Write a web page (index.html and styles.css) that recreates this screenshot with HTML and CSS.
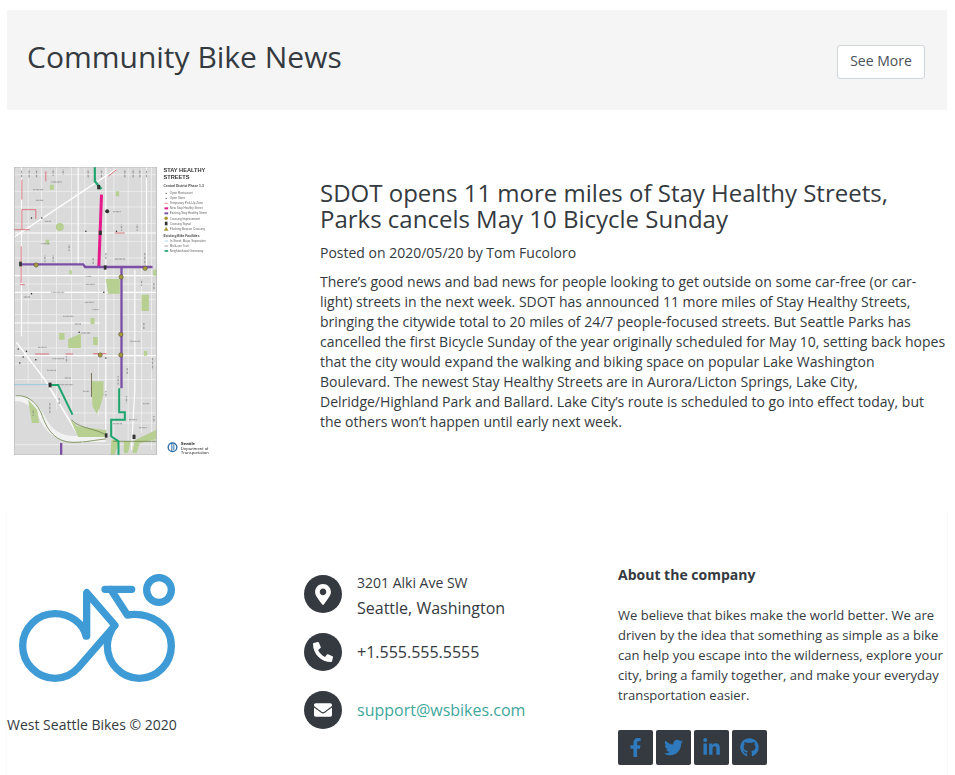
FILE: index.html
```html
<!DOCTYPE html>
<html lang="en">
<head>
<meta charset="utf-8">
<title>Community Bike News</title>
<link rel="stylesheet" href="styles.css">
</head>
<body>
<section class="banner">
  <h1 class="banner-title">Community Bike News</h1>
  <a class="btn" href="#">See More</a>
</section>
<article class="post">
  <div class="post-thumb">
    <svg class="map" viewBox="43 52 590 864" aria-hidden="true">
      <rect x="43" y="52" width="427" height="864" fill="#dadada"/>
      <g stroke="#f4f4f4" stroke-width="2" fill="none">
        <path d="M43 75H470M43 125H470M43 172H470M43 222H470M43 275H470M43 325H470M43 403H470M43 450H470M43 495H470M43 545H470M43 595H470M43 642H470M43 690H470M43 745H470M210 790H470M240 820H470M43 885H470"/>
        <path d="M85 52V700M125 52V700M170 52V780M215 52V780M255 52V840M296 350V800M342 52V900M385 52V900M425 52V850M455 52V900"/>
      </g>
      <g stroke="#fff" stroke-width="3.5" fill="none">
        <path d="M43 250H470M43 378H470M43 428H470M43 520H300M43 618H470"/>
        <path d="M65 52V560M235 52V345M318 52V840M405 360V720L395 900M440 52V350"/>
        <path d="M43 262L350 58" stroke-width="4.5"/>
        <path d="M50 578L135 690L250 880" stroke-width="4.5"/>
      </g>
      <path d="M45 745C80 745 110 770 130 810C150 850 180 868 230 868H318" stroke="#f2f2f2" stroke-width="18" fill="none"/>
      <g fill="#b7cf90">
        <path d="M318 388H360V432H325ZM425 435H447V484H425ZM205 568L243 552V595H205ZM275 695H311V735L300 775L290 792L278 770Z"/>
        <circle cx="180" cy="232" r="12"/>
        <path d="M178 550H194V570H178ZM280 562H294V586H280ZM348 125H358V140H348ZM272 505H284V523H272ZM432 604H442V618H432ZM150 105H162V120H150ZM208 362H216V374H208ZM460 360H470V378H460ZM137 270H148V284H137Z"/>
        <path d="M85 750L112 780L118 820H96ZM212 810L232 830L318 842V862H235ZM335 870H356V880L345 916H332ZM372 875H392L385 910H372ZM405 872L470 840V868L420 880L410 910H398Z"/>
      </g>
      <g fill="none" stroke="#75884f" stroke-width="2.5">
        <path d="M47 738C90 735 115 765 128 800C145 850 175 878 220 878C260 878 290 870 318 868"/>
        <path d="M215 810C235 835 280 835 318 855M340 875H470"/>
      </g>
      <g class="map-labels" stroke="#8a8a8a" stroke-width="4" stroke-dasharray="2 2" fill="none">
        <path d="M65 60V85M88 60V85M110 60V85M160 60V80M190 60V75M265 60V85M305 60V85M375 60V85M400 60V85M420 60V85M440 60V85"/>
        <path d="M155 97H185M100 120H132M108 152H132M135 215H155M340 186H364M125 282H150M345 328H375M260 380H275M258 404H285M255 458H282M278 480H298M190 500H220M225 523H245M245 550H272M390 575H420M115 593H140M158 627H192M142 662H170M195 685H215M175 705H220M250 725H268M388 810H412M340 822H368M418 834H442M430 762H448M155 428H195M72 442H90"/>
        <path d="M365 225V245M412 225V245M208 285V305M160 318V338M135 318V338M280 325V345M318 310V330M435 310V345M462 400V420M425 390V410M382 655V675M355 680V705M200 620V640M458 625V660M318 725V745M380 740V760M432 520V540M100 780V800M150 760V790M178 745V765M462 800V820"/>
      </g>
      <g fill="#222">
        <circle cx="126" cy="205" r="2.2"/><circle cx="95" cy="205" r="2.2"/><circle cx="258" cy="245" r="2.2"/><circle cx="350" cy="245" r="2.2"/><circle cx="312" cy="428" r="2.2"/><circle cx="238" cy="548" r="2.2"/><circle cx="60" cy="640" r="2.2"/><circle cx="80" cy="605" r="2.2"/><circle cx="108" cy="630" r="2.2"/><circle cx="318" cy="625" r="2.2"/><circle cx="95" cy="432" r="2.2"/><circle cx="55" cy="598" r="2.2"/><circle cx="70" cy="622" r="2.2"/>
      </g>
      <path d="M66 90V150M66 180H108V208M66 180V240M43 240H90M64 290V400M106 613H148M197 613H220M280 612H320M138 65V95M350 60L325 80M345 250H375M60 405H75" stroke="#d8606a" stroke-width="2.5" fill="none"/>
      <path d="M43 705H150" stroke="#8cc4dc" stroke-width="2.5" fill="none"/>
      <path d="M275 670V742" stroke="#6b6040" stroke-width="2.5" fill="none"/>
      <path d="M285 52V95L305 118" stroke="#1fa56f" stroke-width="6.5" fill="none"/>
      <path d="M305 135L297 352" stroke="#e5198c" stroke-width="9" fill="none"/>
      <path d="M60 344H250L256 352H458M365 352V716M184 880V916" stroke="#7b4fa5" stroke-width="7" fill="none"/>
      <path d="M150 706H175L218 795M358 716V788H375V810H334V860L356 875V916" stroke="#1fa56f" stroke-width="6" fill="none"/>
      <g fill="#a99b3c" stroke="#4a4a3a" stroke-width="1.5">
        <circle cx="109" cy="346" r="6.5"/><circle cx="436" cy="356" r="6.5"/><circle cx="364" cy="382" r="6.5"/>
        <circle cx="363" cy="554" r="6.5"/><circle cx="301" cy="616" r="6.5"/><circle cx="363" cy="616" r="6.5"/>
      </g>
      <g fill="#333">
        <rect x="58" y="336" width="8" height="14"/><rect x="312" y="347" width="8" height="13"/><rect x="292" y="106" width="9" height="13"/>
        <rect x="297" y="243" width="9" height="13"/><rect x="146" y="699" width="9" height="14"/><rect x="315" y="851" width="8" height="13"/><rect x="398" y="855" width="9" height="13"/>
        <circle cx="322" cy="185" r="6"/>
      </g>
      <rect x="43" y="52" width="427" height="864" fill="none" stroke="#aaa" stroke-width="2"/>
      <g class="map-legend">
        <text x="491" y="66" class="map-head">STAY HEALTHY</text>
        <text x="491" y="88" class="map-head">STREETS</text>
        <text x="491" y="112" class="map-sub">Central District Phase 1-3</text>
        <text x="510" y="134">Open Restaurant</text>
        <text x="510" y="149">Open Store</text>
        <text x="510" y="164">Temporary Pick-Up Zone</text>
        <text x="510" y="179">New Stay Healthy Street</text>
        <text x="510" y="194">Existing Stay Healthy Street</text>
        <text x="510" y="210">Crossing Improvement</text>
        <text x="510" y="225">Crossing Signal</text>
        <text x="510" y="241">Flashing Beacon Crossing</text>
        <text x="491" y="261" class="map-sub">Existing Bike Facilities</text>
        <text x="510" y="277">In Street, Major Separation</text>
        <text x="510" y="292">Multi-use Trail</text>
        <text x="510" y="308">Neighborhood Greenway</text>
      </g>
      <path d="M494 161H505" stroke="#d8505c" stroke-width="2"/>
      <path d="M494 176H505" stroke="#e5198c" stroke-width="6"/>
      <path d="M494 191H505" stroke="#7b4fa5" stroke-width="6"/>
      <path d="M494 274H505" stroke="#8cc4dc" stroke-width="2"/>
      <path d="M494 289H505" stroke="#777" stroke-width="2"/>
      <path d="M494 304H505" stroke="#1fa56f" stroke-width="5"/>
      <circle cx="499" cy="206" r="5.5" fill="#a99b3c"/><rect x="495" y="216" width="8" height="11" fill="#333"/><path d="M499 231L506 243H492Z" fill="#a99b3c"/>
      <circle cx="499" cy="131" r="2" fill="#333"/><circle cx="499" cy="146" r="2" fill="#336"/>
      <circle cx="518" cy="893" r="13" fill="none" stroke="#2d6da8" stroke-width="4"/>
      <path d="M516 880V906M522 884V902" stroke="#2d6da8" stroke-width="3"/>
      <text x="543" y="887" class="map-org">Seattle</text>
      <text x="543" y="900" class="map-org-light">Department of</text>
      <text x="543" y="913" class="map-org-light">Transportation</text>
    </svg>
  </div>
  <div class="post-body">
    <h2 class="post-title">SDOT opens 11 more miles of Stay Healthy Streets, Parks cancels May 10 Bicycle Sunday</h2>
    <p class="post-meta">Posted on 2020/05/20 by Tom Fucoloro</p>
    <p class="post-text">There’s good news and bad news for people looking to get outside on some car-free (or car-light) streets in the next week. SDOT has announced 11 more miles of Stay Healthy Streets, bringing the citywide total to 20 miles of 24/7 people-focused streets. But Seattle Parks has cancelled the first Bicycle Sunday of the year originally scheduled for May 10, setting back hopes that the city would expand the walking and biking space on popular Lake Washington Boulevard. The newest Stay Healthy Streets are in Aurora/Licton Springs, Lake City, Delridge/Highland Park and Ballard. Lake City’s route is scheduled to go into effect today, but the others won’t happen until early next week.</p>
  </div>
</article>
<footer class="footer">
  <div class="foot-brand">
    <svg class="logo" viewBox="57 222 468 324" aria-hidden="true">
      <g fill="none" stroke="#3f9bd5" stroke-width="22" stroke-linecap="round" stroke-linejoin="round">
        <path d="M258 408C250 370 210 341 165 341C112 341 68 384 68 437C68 490 112 535 165 535C195 535 218 522 235 503L345 376L260 278V408"/>
        <path d="M315 268H395M332 268L382 345C450 335 514 375 514 437C514 490 471 535 418 535C365 535 322 490 322 437C322 420 326 408 334 392"/>
        <circle cx="477" cy="270" r="37"/>
      </g>
    </svg>
    <p class="copyright">West Seattle Bikes © 2020</p>
  </div>
  <div class="foot-contact">
    <div class="contact-row">
      <span class="contact-icon"><svg class="icon-pin" viewBox="0 0 384 512"><path d="M172.268 501.67C26.97 291.031 0 262.528 0 192 0 85.961 85.961 0 192 0s192 85.961 192 192c0 70.528-26.97 99.031-172.268 309.67-9.535 13.774-29.93 13.773-39.464 0zM192 272c44.183 0 80-35.817 80-80s-35.817-80-80-80-80 35.817-80 80 35.817 80 80 80z"/></svg></span>
      <div class="contact-text contact-stack"><div class="contact-small">3201 Alki Ave SW</div><div class="contact-line">Seattle, Washington</div></div>
    </div>
    <div class="contact-row">
      <span class="contact-icon"><svg class="icon-phone" viewBox="0 0 512 512"><path d="M493.4 24.6l-104-24c-11.3-2.6-22.9 3.3-27.5 13.9l-48 112c-4.2 9.8-1.4 21.3 6.9 28l60.6 49.6c-36 76.7-98.9 140.5-177.2 177.2l-49.6-60.6c-6.8-8.3-18.2-11.1-28-6.9l-112 48C3.9 366.5-2 378.1.6 389.4l24 104C27.1 504.2 36.7 512 48 512c256.1 0 464-207.5 464-464 0-11.2-7.7-20.9-18.6-23.4z"/></svg></span>
      <div class="contact-text contact-line">+1.555.555.5555</div>
    </div>
    <div class="contact-row">
      <span class="contact-icon"><svg viewBox="0 0 512 512"><path d="M502.3 190.8c3.9-3.1 9.7-.2 9.7 4.7V400c0 26.5-21.5 48-48 48H48c-26.5 0-48-21.5-48-48V195.6c0-5 5.7-7.8 9.7-4.7 22.4 17.4 52.1 39.5 154.1 113.6 21.1 15.4 56.7 47.8 92.2 47.6 35.7.3 72-32.8 92.3-47.6 102-74.1 131.6-96.3 154-113.7zM256 320c23.2.4 56.6-29.2 73.4-41.4 132.7-96.3 142.8-104.7 173.4-128.7 5.8-4.5 9.2-11.5 9.2-18.9v-19c0-26.5-21.5-48-48-48H48C21.5 64 0 85.5 0 112v19c0 7.4 3.4 14.3 9.2 18.9 30.6 23.9 40.7 32.4 173.4 128.7 16.8 12.2 50.2 41.8 73.4 41.4z"/></svg></span>
      <a class="contact-text contact-line contact-link" href="#">support@wsbikes.com</a>
    </div>
  </div>
  <div class="foot-about">
    <h3 class="about-title">About the company</h3>
    <p class="about-text">We believe that bikes make the world better. We are driven by the idea that something as simple as a bike can help you escape into the wilderness, explore your city, bring a family together, and make your everyday transportation easier.</p>
    <div class="socials">
      <a class="social" href="#"><svg viewBox="0 0 320 512"><path d="M279.14 288l14.22-92.66h-88.91v-60.13c0-25.35 12.42-50.06 52.24-50.06h40.42V6.26S260.43 0 225.36 0c-73.22 0-121.08 44.38-121.08 124.72v70.62H22.89V288h81.39v224h100.17V288z"/></svg></a>
      <a class="social" href="#"><svg viewBox="0 0 512 512"><path d="M459.37 151.716c.325 4.548.325 9.097.325 13.645 0 138.72-105.583 298.558-298.558 298.558-59.452 0-114.68-17.219-161.137-47.106 8.447.974 16.568 1.299 25.34 1.299 49.055 0 94.213-16.568 130.274-44.832-46.132-.975-84.792-31.188-98.112-72.772 6.498.974 12.995 1.624 19.818 1.624 9.421 0 18.843-1.3 27.614-3.573-48.081-9.747-84.143-51.98-84.143-102.985v-1.299c13.969 7.797 30.214 12.67 47.431 13.319-28.264-18.843-46.781-51.005-46.781-87.391 0-19.492 5.197-37.36 14.294-52.954 51.655 63.675 129.3 105.258 216.365 109.807-1.624-7.797-2.599-15.918-2.599-24.04 0-57.828 46.782-104.934 104.934-104.934 30.213 0 57.502 12.67 76.67 33.137 23.715-4.548 46.456-13.32 66.599-25.34-7.798 24.366-24.366 44.833-46.132 57.827 21.117-2.273 41.584-8.122 60.426-16.243-14.292 20.791-32.161 39.308-52.628 54.253z"/></svg></a>
      <a class="social" href="#"><svg viewBox="0 0 448 512"><path d="M100.28 448H7.4V148.9h92.88zM53.79 108.1C24.09 108.1 0 83.5 0 53.8a53.79 53.79 0 0 1 107.58 0c0 29.7-24.1 54.3-53.79 54.3zM447.9 448h-92.68V302.4c0-34.7-.7-79.2-48.29-79.2-48.29 0-55.69 37.7-55.69 76.7V448h-92.78V148.9h89.08v40.8h1.3c12.4-23.5 42.69-48.3 87.88-48.3 94 0 111.28 61.9 111.28 142.3V448z"/></svg></a>
      <a class="social" href="#"><svg viewBox="0 0 496 512"><path d="M244.8 8C106.1 8 0 113.3 0 252c0 110.9 69.8 205.8 169.5 239.2 12.8 2.3 17.3-5.6 17.3-12.1 0-6.2-.3-40.4-.3-61.4 0 0-70 15-84.7-29.8 0 0-11.4-29.1-27.8-36.6 0 0-22.9-15.7 1.6-16 0 0 24.9 2 38.6 25.8 21.9 38.6 58.6 27.5 72.9 20.9 2.3-16 8.8-27.1 16-33.7-55.9-6.2-112.3-14.3-112.3-110.5 0-27.5 7.6-41.3 23.6-58.9-2.6-6.5-11.1-33.3 2.6-67.9 20.9-6.5 69 27 69 27 20-5.6 41.5-8.5 62.8-8.5s42.8 2.9 62.8 8.5c0 0 48.1-33.6 69-27 13.7 34.7 5.2 61.4 2.6 67.9 16 17.7 25.8 31.5 25.8 58.9 0 96.5-58.9 104.2-114.8 110.5 9.2 7.9 17 22.9 17 46.4 0 33.7-.3 75.4-.3 83.6 0 6.5 4.6 14.4 17.3 12.1C428.2 457.8 496 362.9 496 252 496 113.3 383.5 8 244.8 8z"/></svg></a>
    </div>
  </div>
</footer>
</body>
</html>
```
FILE: styles.css
```css
* { box-sizing: border-box; }
html, body { height: 775px; overflow: hidden; }
body {
  margin: 0;
  padding: 10px 8px 0 7px;
  font-family: "Open Sans", sans-serif;
  font-size: 14px;
  line-height: 20px;
  color: #343a40;
  background: #fff;
}
.banner {
  height: 100px;
  background: #f5f5f5;
  display: flex;
  align-items: center;
  justify-content: space-between;
  padding: 0 22px 0 20px;
}
.banner-title { margin: 0 0 7px; font-size: 30px; line-height: 36px; font-weight: 400; }
.btn {
  display: block;
  width: 88px;
  height: 34px;
  margin-top: 3px;
  text-align: center;
  line-height: 30px;
  font-size: 14px;
  color: #495057;
  text-decoration: none;
  background: #fff;
  border: 1px solid #ced4da;
  border-radius: 3px;
}
.post {
  display: flex;
  margin-top: 57px;
  height: 344px;
}
.post-thumb { width: 313px; padding-left: 7px; flex: none; }
.map { display: block; width: 197px; height: 288px; filter: blur(0.35px); }
.map-legend text { font-family: "Liberation Sans", sans-serif; font-size: 9px; fill: #666; }
.map-legend .map-head { font-size: 17px; font-weight: 700; fill: #333; }
.map-legend .map-sub { font-size: 10px; font-weight: 700; fill: #444; }
.map-org { font-family: "Liberation Sans", sans-serif; font-size: 13px; font-weight: 700; fill: #222; }
.map-org-light { font-family: "Liberation Sans", sans-serif; font-size: 13px; fill: #333; }
.post-body { flex: 1; padding-top: 13px; min-width: 0; }
.post-title { margin: 0 0 11px; font-size: 24px; line-height: 26px; font-weight: 400; }
.post-meta { margin: 0 0 9px; }
.post-text { margin: 0; }
.footer {
  display: flex;
  height: 264px;
  box-shadow: -1px 0 #f9f9f9, 1px 0 #f9f9f9;
}
.foot-brand { width: 297px; flex: none; padding-top: 63px; }
.logo { display: block; width: 156px; height: 108px; margin-left: 12px; }
.copyright { margin: 33px 0 0; }
.foot-contact { width: 314px; flex: none; padding-top: 64px; display: flex; flex-direction: column; gap: 20px; }
.contact-row { display: flex; align-items: center; gap: 15px; height: 38px; }
.contact-icon {
  width: 38px; height: 38px; flex: none;
  border-radius: 50%;
  background: #343a40;
  display: flex; align-items: center; justify-content: center;
}
.contact-icon svg { width: 18px; height: 18px; fill: #fff; }
.contact-icon .icon-pin { width: 16px; height: 21px; }
.contact-icon .icon-phone { width: 20px; height: 20px; transform: scaleX(-1); }
.contact-stack { padding-top: 6px; }
.contact-small { font-size: 14px; line-height: 22px; }
.contact-stack .contact-line { line-height: 28px; }
.contact-line { font-size: 16px; line-height: 26px; }
.contact-link { color: #3fa79c; text-decoration: none; }
.foot-about { flex: 1; padding-top: 54px; min-width: 0; }
.about-title { margin: 0 0 20px; font-size: 14px; line-height: 20px; font-weight: 700; }
.about-text { margin: 0 0 25px; font-size: 13px; line-height: 20px; }
.socials { display: flex; gap: 3px; }
.social {
  width: 35px; height: 35px;
  background: #343a40;
  border-radius: 2px;
  display: flex; align-items: center; justify-content: center;
}
.social svg { width: 19px; height: 19px; fill: #2f79bd; }
```
